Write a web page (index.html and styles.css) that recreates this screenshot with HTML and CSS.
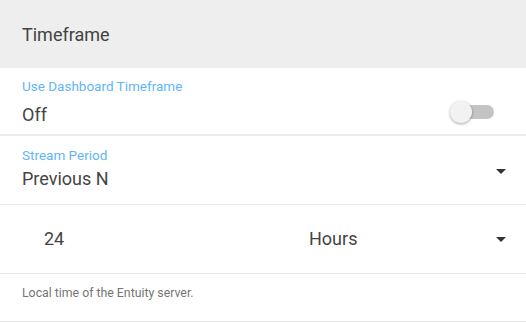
FILE: index.html
```html
<!DOCTYPE html>
<html lang="en">
<head>
    <meta charset="UTF-8">
    <meta name="viewport" content="width=device-width, initial-scale=1.0">
    <title>Timeframe</title>
    <link rel="stylesheet" href="styles.css">
</head>
<body>

    <div class="panel">
        <div class="panel-head">Timeframe</div>

        <div class="field toggle-field">
            <div>
                <div class="field-label">Use Dashboard Timeframe</div>
                <div class="field-value">Off</div>
            </div>
            <span class="switch">
                <span class="switch-track"></span>
                <span class="switch-thumb"></span>
            </span>
        </div>

        <div class="field select-field">
            <div>
                <div class="field-label">Stream Period</div>
                <div class="field-value">Previous N</div>
            </div>
            <svg class="caret" width="10" height="5" viewBox="0 0 10 5"><path d="M0 0h10L5 5z"/></svg>
        </div>

        <div class="field period-row">
            <div class="period-count">24</div>
            <div class="period-unit">
                <span>Hours</span>
                <svg class="caret" width="10" height="5" viewBox="0 0 10 5"><path d="M0 0h10L5 5z"/></svg>
            </div>
        </div>

        <div class="field hint">Local time of the Entuity server.</div>
    </div>

</body>
</html>
```

FILE: styles.css
```css
body {
    margin: 0;
    background: #fff;
    font-family: Roboto, "Noto Sans", sans-serif;
    color: #444;
}

.panel {
    width: 526px;
}

.panel-head {
    height: 68px;
    box-sizing: border-box;
    padding: 23px 22px 0;
    background: #eeeeee;
    font-size: 18px;
    line-height: 24px;
    color: #424242;
}

.field {
    box-sizing: border-box;
    padding: 0 20px 0 22px;
    border-bottom: 1px solid #e8e8e8;
}

.field-label {
    font-size: 13.5px;
    line-height: 16px;
    color: #64b5f6;
}

.field-value {
    font-size: 18px;
    line-height: 24px;
    color: #444;
}

/* toggle row */
.toggle-field {
    height: 68px;
    padding-top: 10px;
    display: flex;
    justify-content: space-between;
    border-bottom: 2px solid #ececec;
}

.toggle-field .field-label {
    margin-bottom: 9px;
}

.switch {
    position: relative;
    width: 44px;
    height: 22px;
    margin: 23px 12px 0 0;
}

.switch-track {
    position: absolute;
    left: 10px;
    top: 4px;
    width: 34px;
    height: 14px;
    border-radius: 7px;
    background: #c4c4c4;
}

.switch-thumb {
    position: absolute;
    left: 0;
    top: 0;
    width: 22px;
    height: 22px;
    border-radius: 50%;
    background: #f2f2f2;
    box-shadow: 0 1px 3px rgba(0, 0, 0, 0.35);
}

/* select rows */
.select-field {
    height: 69px;
    padding-top: 11px;
    display: flex;
    justify-content: space-between;
    align-items: flex-start;
}

.select-field .field-label {
    margin-bottom: 4px;
}

.select-field .caret {
    margin-top: 22px;
}

.caret {
    fill: #333;
}

.period-row {
    height: 69px;
    display: grid;
    grid-template-columns: 287px 1fr;
    align-items: center;
    font-size: 18px;
    line-height: 24px;
}

.period-count {
    padding-left: 22px;
}

.period-unit {
    display: flex;
    justify-content: space-between;
    align-items: center;
}

.hint {
    height: 48px;
    padding-top: 11px;
    font-size: 12.3px;
    line-height: 16px;
    color: #757575;
}
```
